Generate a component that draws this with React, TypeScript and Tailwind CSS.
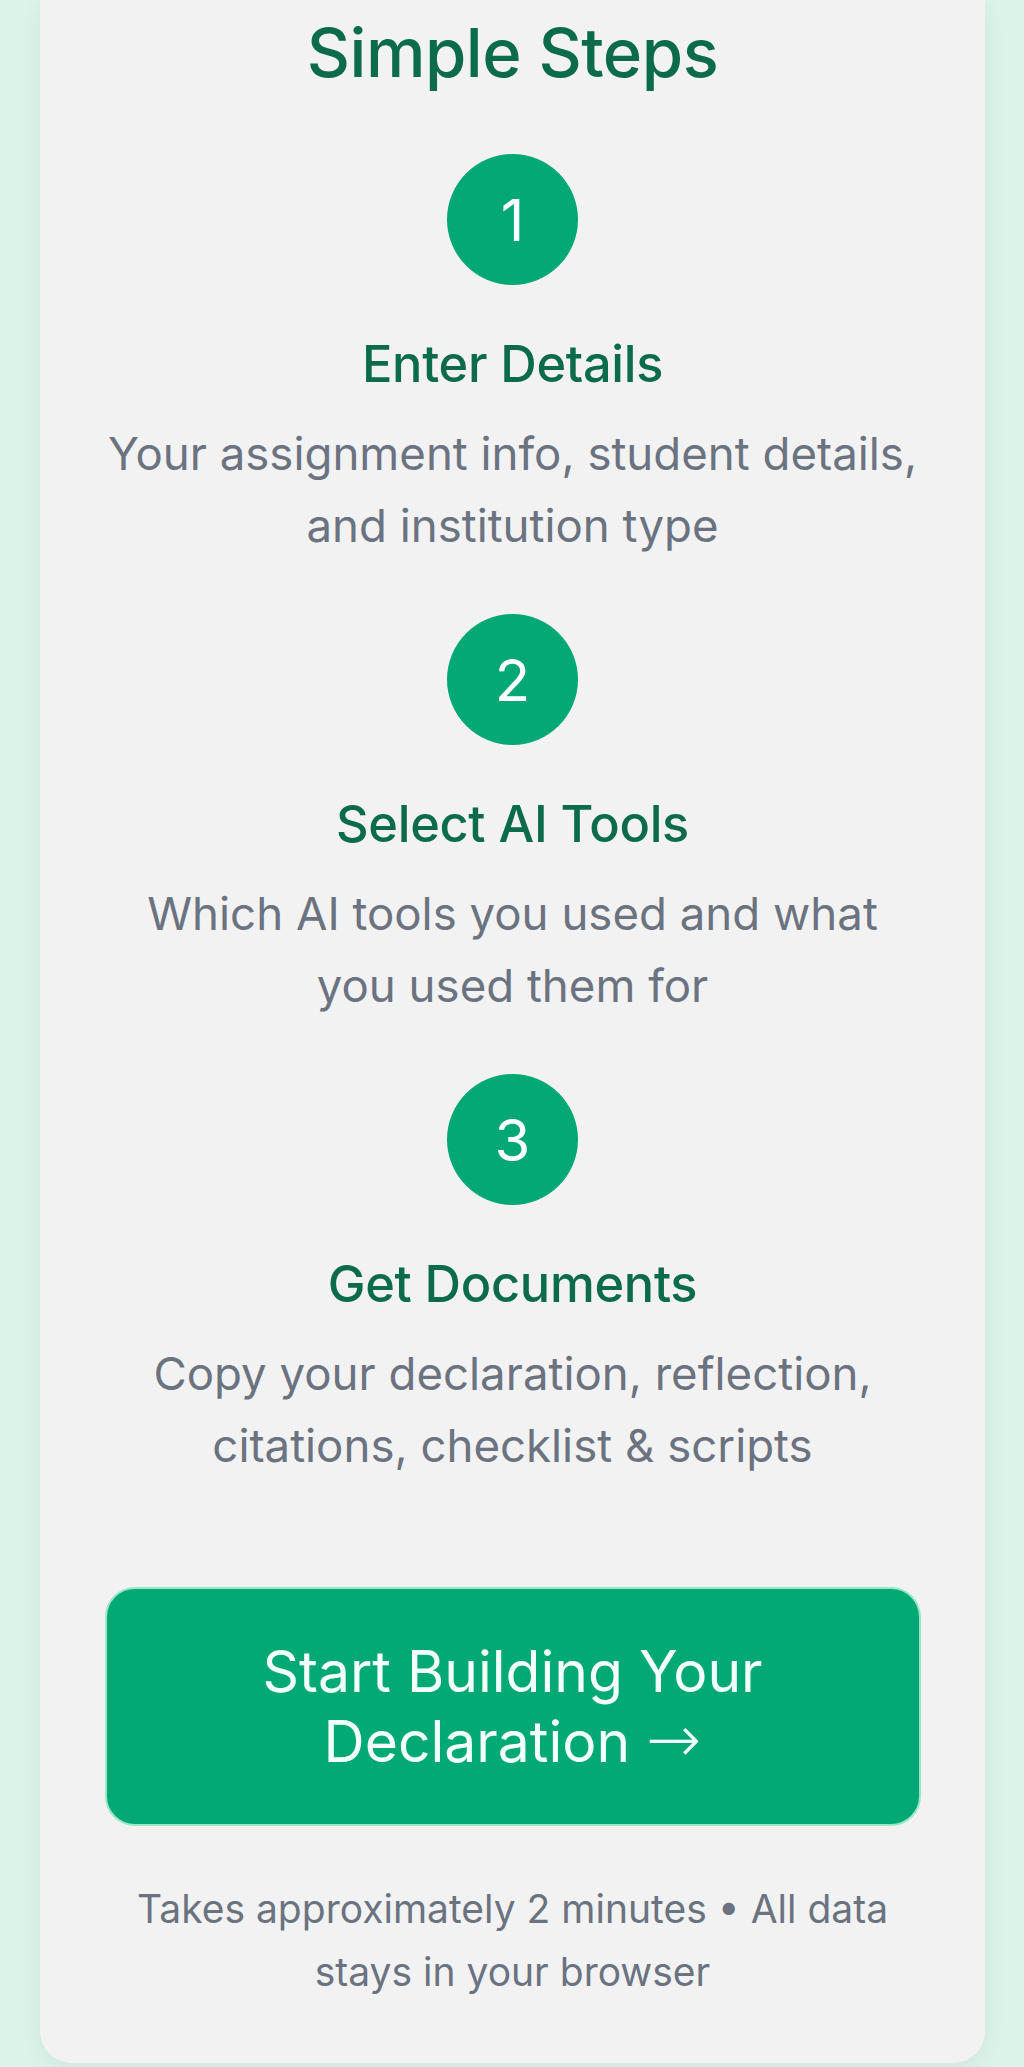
import React from "react";

const steps = [
  { n: "1", title: "Enter Details", lines: ["Your assignment info, student details,", "and institution type"] },
  { n: "2", title: "Select AI Tools", lines: ["Which AI tools you used and what", "you used them for"] },
  { n: "3", title: "Get Documents", lines: ["Copy your declaration, reflection,", "citations, checklist & scripts"] },
];

export default function App() {
  return (
    <div
      className="min-h-[2067px] w-[1024px] bg-[#dcf3ea] overflow-hidden"
      style={{ fontFamily: "Inter, 'Noto Sans', 'Liberation Sans', sans-serif" }}
    >
      <div className="mx-[40px] w-[945px] bg-[#f2f2f2] rounded-b-[32px] shadow-[0_6px_24px_rgba(0,0,0,0.06)] pt-[9px] pb-[60px] px-[40px] flex flex-col items-center">
        <h2 className="text-[67px] leading-[88px] font-medium text-[#0b6b4b] tracking-[-0.5px]">Simple Steps</h2>

        <div className="mt-[57px] flex flex-col items-center gap-[52px] w-full">
          {steps.map((s) => (
            <div key={s.n} className="flex flex-col items-center text-center">
              <div className="w-[131px] h-[131px] rounded-full bg-[#04a874] flex items-center justify-center text-white text-[58px] font-normal leading-none">
                {s.n}
              </div>
              <h3 className="mt-[45px] text-[50.5px] leading-[68px] font-medium text-[#0b6b4b] tracking-[-0.3px]">
                {s.title}
              </h3>
              <p className="mt-[20px] text-[45.6px] leading-[72px] text-[#6b7280] whitespace-nowrap">
                {s.lines[0]}
                <br />
                {s.lines[1]}
              </p>
            </div>
          ))}
        </div>

        <button className="mt-[105px] w-[816px] h-[239px] rounded-[30px] bg-[#03a975] border-[2px] border-[#9be6c6] text-[#f3fff9] text-[57px] leading-[68px] font-normal flex items-center justify-center text-center">
          <span>
            Start Building Your
            <br />
            Declaration{" "}
            <span className="text-[66px] font-extralight" style={{ fontFamily: "'DejaVu Sans', sans-serif" }}>→</span>
          </span>
        </button>

        <p className="mt-[51px] text-[39px] leading-[63px] text-[#6b7280] text-center whitespace-nowrap">
          Takes approximately 2 minutes • All data
          <br />
          stays in your browser
        </p>
      </div>
    </div>
  );
}
